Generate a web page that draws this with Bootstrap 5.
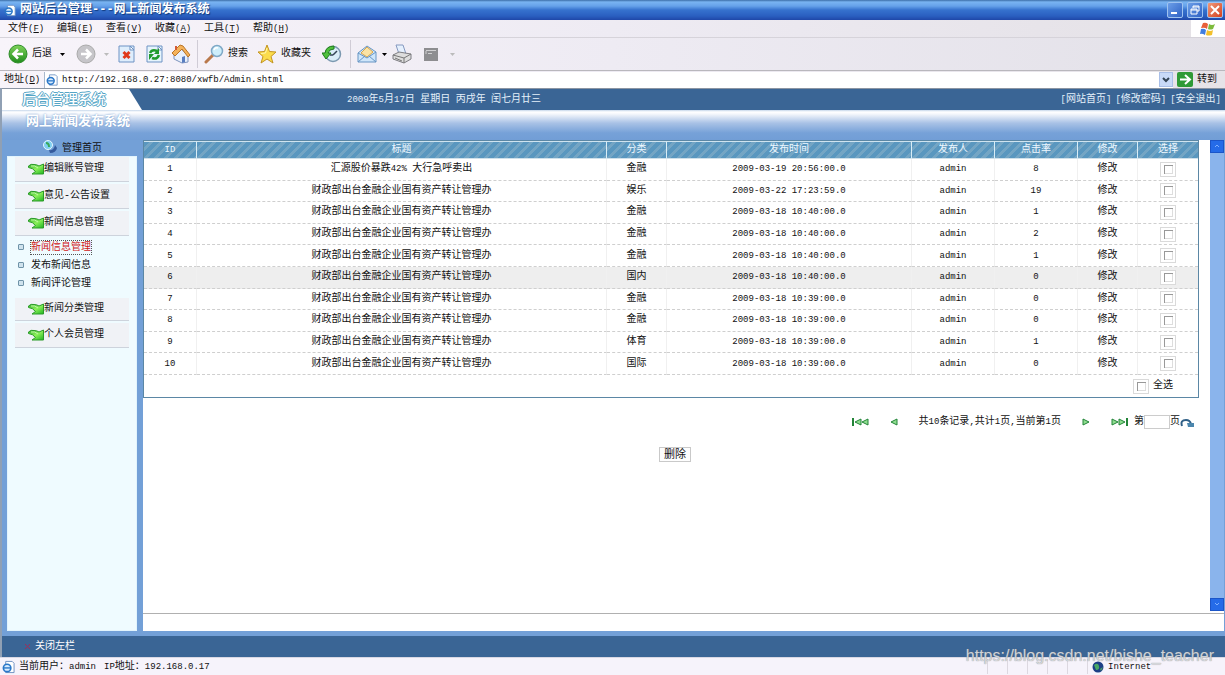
<!DOCTYPE html>
<html lang="zh-CN">
<head>
<meta charset="utf-8">
<meta name="viewport" content="width=device-width, initial-scale=1">
<title>网站后台管理---网上新闻发布系统</title>
<link href="https://cdn.jsdelivr.net/npm/bootstrap@5.3.0/dist/css/bootstrap.min.css" rel="stylesheet">
<style>
body{font-family:"Liberation Mono","Noto Sans CJK SC",monospace;font-size:10px;line-height:16px;color:#111;background:#fff}
button{border:0;background:none;padding:0;color:inherit;white-space:nowrap}
a{color:inherit;text-decoration:none}
.lat{font-size:9px}
svg{flex:none;display:block}
/* browser window */
.titlebar{height:20px;padding-left:4px;background:linear-gradient(#3c6ea8 0,#79b4f2 2px,#66a2ea 6px,#3672ce 10px,#2a5fc0 16px,#1f47a8 20px);color:#fff;font-size:12px;text-shadow:1px 1px 1px #123a7c}
.winbtns{padding-right:2px}
.winbtn{width:16px;height:16px;border:1px solid #9fc3f0;border-radius:2px;background:linear-gradient(135deg,#6b9ee8,#2f62c4)}
.winbtn.close-x{background:linear-gradient(135deg,#f0997a,#d5421e)}
.menubar{height:18px;line-height:18px;background:linear-gradient(90deg,#f8f4fa,#eeebf3 50%,#e4e1e6);border-bottom:1px solid #d6d3da}
.menubar .entry{width:49px;padding-left:8px}
.flagbox{width:34px;background:#fff}
.toolbar{height:33px;padding-left:8px;background:linear-gradient(90deg,#f8f4fa,#eeebf3 50%,#e3e1e8);border-bottom:1px solid #b9b7bd}
.toolbar button{display:flex;align-items:center;justify-content:center;gap:4px;flex:none}
.w8{width:8px}.w12{width:12px}.w20{width:20px}.w26{width:26px}.w28{width:28px}.w30{width:30px}.w44{width:44px}.w50{width:50px}.w66{width:66px}
.tsep{width:1px;height:28px;margin:0 3px;background:#d0ccd6;flex:none}
.addr{height:17px;background:linear-gradient(90deg,#f8f4fa,#eeebf3 50%,#e6e3e8)}
.addr-field{background:#fff;border-left:1px solid #a9b8cc;padding-left:1px}
.addr-field input{border:0;outline:0;padding:0;background:none;line-height:16px;color:#111}
.ddl{width:14px;height:15px;border:1px solid #a9bfe8;background:#c9daf8}
/* page header */
.sitehead{height:22px;background:#3a6595;color:#e4f0fa;border-top:1px solid #8b95a3}
.tab{width:140px;background:#fff;clip-path:polygon(0 0,127px 0,140px 100%,0 100%);padding-left:20px}
.tabname{font-size:14px;line-height:22px;color:#fff;font-weight:500;text-shadow:1px 0 #55a5c6,-1px 0 #55a5c6,0 1px #55a5c6,0 -1px #55a5c6}
.date{padding-left:205px}
.frame-l{border-left:2px solid #90a0b4}
.subhead{height:30px;background:linear-gradient(#c5d6ea 0,#fff 2px,#f4f7fc 4px,#a9c2e6 13px,#76a1d8 23px,#729ed6 30px);color:#fff;font-size:13px;font-weight:700;line-height:24px;padding-left:24px;text-shadow:0 0 2px #6a94c8}
.work{background:#73a0d7}
/* left column */
.side{width:141px;padding:0 6px 5px 5px;flex:none}
.side-top{height:16px;padding-left:35px;line-height:18px}
.side-body{background:#effbff;border:1px solid #e2f4fd}
.grp{height:27px;width:114px;margin-left:7px;padding-left:13px;border-bottom:1px solid #cdd3dc;background:#f0f2f6;border-top:2px solid #effbff}
.grp.first{height:25px;border-top:0}
.grp.after{height:25px}
.subs{padding:2px 0 4px;margin:0;list-style:none}
.subs li{height:18px;padding-left:10px;display:flex;align-items:center}
.dotsq{width:6px;height:6px;border:1px solid #6f93a8;background:#cfe3ee;border-radius:1px;margin-right:7px}
.subs a{line-height:13px}
.subs .on{color:#d01818;outline:1px dotted #555}
/* content */
.content-col{padding-bottom:5px;padding-right:1px}
.view{background:#fff}
.grid{width:100%;height:258px;table-layout:fixed;border:1px solid #5b87a5;border-collapse:separate;border-spacing:0;text-align:center}
.grid th,.grid td{padding:0;line-height:16px;vertical-align:middle}
.grid th{height:18px;font-weight:400;color:#eef8ff;border-right:1px solid #d9edf6;border-top:1px solid #cfe4f0;border-bottom:1px solid #cfe0ea;background:repeating-linear-gradient(135deg,#5a97bf 0,#5a97bf 4px,#74a5c4 4px,#74a5c4 7px)}
.grid tbody td{border-bottom:1px dashed #cfcfcf;border-right:1px solid #f0f0f0}
.grid th:last-child,.grid tbody td:last-child{border-right:0}
.grid tfoot td{height:22px}
.grid tfoot .d-flex{padding-right:25px}
.hov td{background:#eee}
.c-id{width:53px}.c-s{width:60px}.c-t{width:245px}.c-m{width:83px}
.tick{appearance:none;width:16px;height:15px;margin:0;border:1px solid #dadada;display:block;background:linear-gradient(#999,#999) 3px 2px/9px 1px no-repeat,linear-gradient(#999,#999) 3px 2px/1px 9px no-repeat,linear-gradient(#ddd,#ddd) 11px 2px/1px 9px no-repeat,linear-gradient(#ddd,#ddd) 3px 10px/9px 1px no-repeat,#fff}
.listpane{padding-right:11px}
.pager{height:18px;margin-top:15px;padding-right:5px}
.hop{margin-right:21px}
.hop-end{margin-right:6px}
.pageno{width:26px;height:14px;border:1px solid #ccc;padding:0}
.delrow{padding-left:8px}
.del{border:1px solid #c9c9c9;width:32px;height:15px;line-height:12px;font-size:11px;margin-top:16px;background:#fdfdfd}
.sbar{width:14px;background:#8ab4ec}
.sbtn{height:13px;background:#256be8;border:1px solid #1b55c8}
.under{height:18px;border-top:1px solid #b0b0b0;margin-top:2px}
.foot{height:21px;background:#3a6595;color:#fff;padding-left:22px}
.status{height:18px;background:#f6f3fb;border-top:1px solid #d8d8e4;padding-left:2px}
.cellsep{width:20px;height:15px;border-left:1px solid #dcd8e0}
.cellsep.end{width:5px}
.zone{width:133px;line-height:12px}
.wm{right:11px;bottom:12px;font-family:"Liberation Sans",sans-serif;font-size:16px;line-height:14px;color:rgba(225,228,232,.85);text-shadow:0 0 1px #777}
</style>
</head>
<body>
<svg width="0" height="0" class="position-absolute" aria-hidden="true"><defs>
<linearGradient id="gg" x1="0" y1="0" x2="0" y2="1"><stop offset="0" stop-color="#7fd35a"/><stop offset="1" stop-color="#1f8c1c"/></linearGradient>
<linearGradient id="lg" x1="0" y1="0" x2="1" y2="1"><stop offset="0" stop-color="#2fae2a"/><stop offset=".5" stop-color="#8cf05a"/><stop offset="1" stop-color="#1fb520"/></linearGradient>
<symbol id="ie" viewBox="0 0 14 14"><path d="M4 1h7l2 2v10H4z" fill="#fff" stroke="#6b8fc0"/><circle cx="5.500" cy="8" r="4" fill="#d8ecff" stroke="#2a77c8" stroke-width="1.800"/><path d="M2 8h7" stroke="#2a77c8" stroke-width="1.500"/></symbol>
<symbol id="leaf" viewBox="0 0 16 12"><path d="M.5 3Q3 .5 6 1.500q3 0 5 1.500l4.500-2v10H4l3.500-2.500Q5 5 .5 4.500z" fill="url(#lg)" stroke="#2a9a28"/><path d="M3 3q4-1 7 2" fill="none" stroke="#c0f8a8"/></symbol>
<symbol id="prv" viewBox="0 0 8 8"><path d="M7 1v6L1 4z" fill="#8fdd8f" stroke="#238438"/></symbol>
</defs></svg>

<div class="vh-100 d-flex flex-column overflow-hidden position-relative">
<header>
  <div class="titlebar d-flex align-items-center">
    <svg width="12" height="13"><use href="#ie"/></svg>
    <strong class="ms-1 flex-grow-1 text-nowrap">网站后台管理---网上新闻发布系统</strong>
    <div class="winbtns d-flex gap-1">
      <button class="winbtn" aria-label="最小化"><svg width="14" height="14"><path d="M3 10h6" stroke="#fff" stroke-width="2"/></svg></button>
      <button class="winbtn" aria-label="还原"><svg width="14" height="14" fill="none" stroke="#fff"><path d="M5 5V3h6v5H9M3 6h6v5H3zM3 7h6M5 4h6"/></svg></button>
      <button class="winbtn close-x" aria-label="关闭"><svg width="14" height="14"><path d="M3 3l8 8M11 3l-8 8" stroke="#fff" stroke-width="2"/></svg></button>
    </div>
  </div>
  <nav class="menubar d-flex">
    <a class="entry" href="#">文件<span class="lat">(<u>F</u>)</span></a><a class="entry" href="#">编辑<span class="lat">(<u>E</u>)</span></a><a class="entry" href="#">查看<span class="lat">(<u>V</u>)</span></a><a class="entry" href="#">收藏<span class="lat">(<u>A</u>)</span></a><a class="entry" href="#">工具<span class="lat">(<u>T</u>)</span></a><a class="entry" href="#">帮助<span class="lat">(<u>H</u>)</span></a>
    <div class="flagbox ms-auto d-flex align-items-center justify-content-center"><svg width="16" height="14"><path d="M3 1q3-1 5 1L7 7Q5 5 1 6z" fill="#e8603a"/><path d="M9 2q3 2 6 0l-2 5q-3 1-5 0z" fill="#7dbb3c"/><path d="M1 7q3-1 5 1l-1 5q-3-2-5-1z" fill="#3f7de0"/><path d="M7 8q3 2 6 0l-1 5q-4 1-6 0z" fill="#f2c02c"/></svg></div>
  </nav>
  <div class="toolbar d-flex align-items-center">
    <button class="w44"><svg width="20" height="20"><circle cx="10" cy="10" r="9" fill="url(#gg)" stroke="#2f8d2a"/><path d="M15 10H6M10 5.500L5.500 10l4.500 4.500" stroke="#fff" stroke-width="2.500" fill="none"/></svg>后退</button>
    <button class="w20" aria-label="后退列表"><svg width="5" height="3"><path d="M0 0h5L2.500 3z"/></svg></button>
    <button class="w28" aria-label="前进"><svg width="20" height="20"><circle cx="10" cy="10" r="9" fill="#c6c5c9" stroke="#aaa"/><path d="M5 10h9M10 5.500l4.500 4.500-4.500 4.500" stroke="#fff" stroke-width="2.500" fill="none"/></svg></button>
    <button class="w12" aria-label="前进列表"><svg width="5" height="3"><path d="M0 0h5L2.500 3z" fill="#bbb"/></svg></button>
    <button class="w28" aria-label="停止"><svg width="17" height="18"><path d="M1 1h15v16H1z" fill="#dfeefc" stroke="#6f93c4"/><path d="M12 1l4 4h-4z" fill="#fff" stroke="#6f93c4"/><path d="M5.500 7l6 6M11.500 7l-6 6" stroke="#e03a1c" stroke-width="3"/></svg></button>
    <button class="w28" aria-label="刷新"><svg width="17" height="18"><path d="M1 1h15v16H1z" fill="#e6f4fc" stroke="#6f93c4"/><path d="M12 1l4 4h-4z" fill="#fff" stroke="#6f93c4"/><path d="M4 8q2-4 7-2M13 10q-2 5-7 3" stroke="#1f9a2c" stroke-width="2.500" fill="none"/><path d="M13 3v6H8zM3 15V9h5z" fill="#1f9a2c"/></svg></button>
    <button class="w26" aria-label="主页"><svg width="20" height="20"><path d="M3 10l7-5 7 6v7l-6 1-8-4z" fill="#e8f0fc" stroke="#7d93bd"/><path d="M1 9l8-8 3 1 7 9-2 2-6-8-7 7z" fill="#f4b259" stroke="#b97428"/><path d="M11 13l3-1v6l-3 1z" fill="#587dc0"/><path d="M4 2h2v4H4z" fill="#d35a34"/></svg></button>
    <span class="tsep"></span>
    <button class="w50"><svg width="20" height="20"><path d="M9 11l-7 7" stroke="#b9794c" stroke-width="3" stroke-linecap="round"/><circle cx="13" cy="7" r="5.500" fill="#cdeefb" stroke="#7fa8c6" stroke-width="1.500"/><path d="M10 6q1-3 4-2" stroke="#fff" stroke-width="1.500" fill="none"/></svg>搜索</button>
    <button class="w66"><svg width="20" height="20"><path d="M10 1l2.500 6.500L19 8l-5 4.500L16 19l-6-4-6 4 2-6.500L1 8l6.500-.5z" fill="#fbdc4c" stroke="#c39420"/><path d="M10 4L8.500 9 4 9.500" stroke="#fff6b0" fill="none"/></svg>收藏夹</button>
    <button class="w30" aria-label="历史"><svg width="20" height="18"><circle cx="11" cy="9" r="7.500" fill="#d9edf8" stroke="#7b98b0" stroke-width="1.500"/><path d="M11 10l4-4M11 10H8" stroke="#345" stroke-width="1.500"/><path d="M12 1Q4 1 3 8H0l4 6 5-6H6q1-4 6-4z" fill="#4fc03c" stroke="#1d7a1c"/></svg></button>
    <span class="tsep"></span>
    <button class="w26" aria-label="邮件"><svg width="20" height="18"><path d="M1 8l9-7 9 6v10H1z" fill="#cfe6fa" stroke="#6795c4"/><path d="M4 8l6-6 6 5-6 5z" fill="#fbe3a4" stroke="#d8a64c"/><path d="M1 8l9 5 9-6M1 17l7-6M19 17l-7-6" fill="none" stroke="#6795c4"/></svg></button>
    <button class="w8" aria-label="邮件列表"><svg width="5" height="3"><path d="M0 0h5L2.500 3z"/></svg></button>
    <button class="w28" aria-label="打印"><svg width="20" height="20"><path d="M4 1h7l3 9H7z" fill="#e5f0fd" stroke="#8599c0"/><path d="M1 11l6-3 12 2v5l-7 4-11-4z" fill="#ddd" stroke="#7d7d82"/><path d="M1 11l11 3 7-4M12 14v5M3 14l7 3" fill="none" stroke="#777"/></svg></button>
    <button class="w30" aria-label="编辑"><svg width="14" height="13"><path d="M0 0h14v13H0z" fill="#8d8d90"/><path d="M2 2.500h10M2 3v3M4 5.500h4" stroke="#d0d0d2"/></svg></button>
    <button class="w12" aria-label="编辑列表"><svg width="5" height="3"><path d="M0 0h5L2.500 3z" fill="#bbb"/></svg></button>
  </div>
  <div class="addr d-flex align-items-center">
    <label for="url" class="w44 text-nowrap ps-1">地址<span class="lat">(<u>D</u>)</span></label>
    <div class="addr-field flex-grow-1 d-flex align-items-center gap-1">
      <svg width="12" height="14"><use href="#ie"/></svg>
      <input id="url" class="flex-grow-1 lat" value="http://192.168.0.27:8080/xwfb/Admin.shtml">
      <button class="ddl d-flex align-items-center justify-content-center" aria-label="地址列表"><svg width="8" height="6"><path d="M1 1l3 3 3-3" fill="none" stroke="#345" stroke-width="2"/></svg></button>
    </div>
    <button class="d-flex align-items-center gap-1 ps-1 pe-2"><svg width="16" height="15"><rect width="16" height="15" rx="2" fill="#2f9a36"/><path d="M3 7.500h9M8 3l5 4.500L8 12" fill="none" stroke="#fff" stroke-width="2"/></svg>转到</button>
  </div>
</header>

<div class="frame-l flex-grow-1 d-flex flex-column">
  <div class="sitehead d-flex align-items-stretch">
    <div class="tab"><span class="tabname">后台管理系统</span></div>
    <div class="date align-self-center"><span class="lat">2009</span>年<span class="lat">5</span>月<span class="lat">17</span>日<span class="lat"> </span>星期日<span class="lat"> </span>丙戌年<span class="lat"> </span>闰七月廿三</div>
    <div class="ms-auto align-self-center d-flex gap-1 pe-1"><a href="#"><span class="lat">[</span>网站首页<span class="lat">]</span></a><a href="#"><span class="lat">[</span>修改密码<span class="lat">]</span></a><a href="#"><span class="lat">[</span>安全退出<span class="lat">]</span></a></div>
  </div>
  <div class="subhead">网上新闻发布系统</div>
  <div class="work flex-grow-1 d-flex">
    <aside class="side d-flex flex-column">
      <div class="side-top d-flex gap-1"><svg width="16" height="14"><circle cx="6" cy="5" r="4.500" fill="#7fd0f0" stroke="#e4f6ff"/><path d="M4 3q3 0 3 4" stroke="#3aa85a" stroke-width="2" fill="none"/><path d="M7 10q5 1 6-5l2 3q-1 5-7 5z" fill="#345a9c"/></svg><a href="#">管理首页</a></div>
      <nav class="side-body flex-grow-1">
        <a href="#" class="grp first d-flex align-items-center"><svg width="16" height="12"><use href="#leaf"/></svg>编辑账号管理</a>
        <a href="#" class="grp d-flex align-items-center"><svg width="16" height="12"><use href="#leaf"/></svg>意见-公告设置</a>
        <a href="#" class="grp d-flex align-items-center"><svg width="16" height="12"><use href="#leaf"/></svg>新闻信息管理</a>
        <ul class="subs">
          <li><span class="dotsq"></span><a href="#" class="on">新闻信息管理</a></li>
          <li><span class="dotsq"></span><a href="#">发布新闻信息</a></li>
          <li><span class="dotsq"></span><a href="#">新闻评论管理</a></li>
        </ul>
        <a href="#" class="grp after d-flex align-items-center"><svg width="16" height="12"><use href="#leaf"/></svg>新闻分类管理</a>
        <a href="#" class="grp d-flex align-items-center"><svg width="16" height="12"><use href="#leaf"/></svg>个人会员管理</a>
      </nav>
    </aside>
    <main class="content-col flex-grow-1 d-flex flex-column">
      <div class="view flex-grow-1 d-flex flex-column">
        <div class="flex-grow-1 d-flex">
          <div class="listpane flex-grow-1">
            <table class="grid">
              <colgroup><col class="c-id"><col><col class="c-s"><col class="c-t"><col class="c-m"><col class="c-m"><col class="c-s"><col class="c-s"></colgroup>
              <thead><tr><th class="lat">ID</th><th>标题</th><th>分类</th><th>发布时间</th><th>发布人</th><th>点击率</th><th>修改</th><th>选择</th></tr></thead>
              <tbody id="rows"></tbody>
              <tfoot><tr><td colspan="8"><div class="d-flex align-items-center justify-content-end gap-1"><input type="checkbox" class="tick" id="all"><label for="all">全选</label></div></td></tr></tfoot>
            </table>
            <div class="pager d-flex align-items-center justify-content-end">
              <a href="#" class="hop" aria-label="首页"><svg width="17" height="8"><path d="M1 0v8" stroke="#238438" stroke-width="2"/><path d="M9 1v6L3 4zM16 1v6l-6-3z" fill="#8fdd8f" stroke="#238438"/></svg></a>
              <a href="#" class="hop" aria-label="上一页"><svg width="8" height="8"><use href="#prv"/></svg></a>
              <span class="hop">共<span class="lat">10</span>条记录<span class="lat">,</span>共计<span class="lat">1</span>页<span class="lat">,</span>当前第<span class="lat">1</span>页</span>
              <a href="#" class="hop" aria-label="下一页"><svg width="8" height="8"><path d="M1 1v6l6-3z" fill="#8fdd8f" stroke="#238438"/></svg></a>
              <a href="#" class="hop-end" aria-label="末页"><svg width="17" height="8"><path d="M1 1v6l6-3zM8 1v6l6-3z" fill="#8fdd8f" stroke="#238438"/><path d="M16 0v8" stroke="#238438" stroke-width="2"/></svg></a>
              <label for="pg">第</label><input id="pg" class="pageno"><span>页</span>
              <button aria-label="跳转"><svg width="14" height="9"><path d="M2 8q-2-6 4-6 4 0 5 4" fill="none" stroke="#2f5f86" stroke-width="2"/><path d="M7 5h7v4H8z" fill="#4b86ad"/></svg></button>
            </div>
            <div class="delrow text-center"><button class="del">删除</button></div>
          </div>
          <div class="sbar d-flex flex-column justify-content-between"><div class="sbtn"><svg width="12" height="11"><path d="M4 6l2-2 2 2" fill="none" stroke="#7eb0ff"/></svg></div><div class="sbtn"><svg width="12" height="11"><path d="M4 4l2 2 2-2" fill="none" stroke="#7eb0ff"/></svg></div></div>
        </div>
        <div class="under"></div>
      </div>
    </main>
  </div>
  <div class="foot d-flex align-items-center gap-1"><svg width="7" height="7"><path d="M1 1l5 5M6 1L1 6" stroke="#a02c58"/></svg><a href="#">关闭左栏</a></div>
</div>
<footer class="status d-flex align-items-center">
  <svg width="13" height="14"><use href="#ie"/></svg>
  <span class="ms-1">当前用户：<span class="lat">admin</span></span><span class="ms-2"><span class="lat">IP</span>地址：<span class="lat">192.168.0.17</span></span>
  <span class="cellsep ms-auto"></span><span class="cellsep"></span><span class="cellsep"></span><span class="cellsep"></span><span class="cellsep"></span>
  <span class="cellsep end"></span>
  <span class="zone d-flex align-items-center gap-1"><svg width="12" height="12"><circle cx="6" cy="6" r="5.500" fill="#1c3f86"/><path d="M2 4q4-3 5 1t-3 4zM8 8l3-2-2 4z" fill="#49a865"/></svg><span class="lat">Internet</span></span>
</footer>
<div class="wm position-absolute">https://blog.csdn.net/bishe_teacher</div>
</div>
<script src="https://cdn.jsdelivr.net/npm/bootstrap@5.3.0/dist/js/bootstrap.bundle.min.js"></script>
<script>
const t='财政部出台金融企业国有资产转让管理办';
const data=[
['汇源股价暴跌<span class="lat">42% </span>大行急呼卖出','金融','19 20:56:00.0',8],[t,'娱乐','22 17:23:59.0',19],[t,'金融','18 10:40:00.0',1],[t,'金融','18 10:40:00.0',2],[t,'金融','18 10:40:00.0',1],[t,'国内','18 10:40:00.0',0],[t,'金融','18 10:39:00.0',0],[t,'金融','18 10:39:00.0',0],[t,'体育','18 10:39:00.0',1],[t,'国际','18 10:39:00.0',0]];
document.getElementById('rows').innerHTML=data.map((r,i)=>`<tr class="${i===5?'hov':''}"><td class="lat">${i+1}</td><td>${r[0]}</td><td>${r[1]}</td><td class="lat">2009-03-${r[2]}</td><td class="lat">admin</td><td class="lat">${r[3]}</td><td><a href="#">修改</a></td><td><input type="checkbox" class="tick mx-auto" aria-label="选择第${i+1}条"></td></tr>`).join('');
</script>
</body>
</html>
